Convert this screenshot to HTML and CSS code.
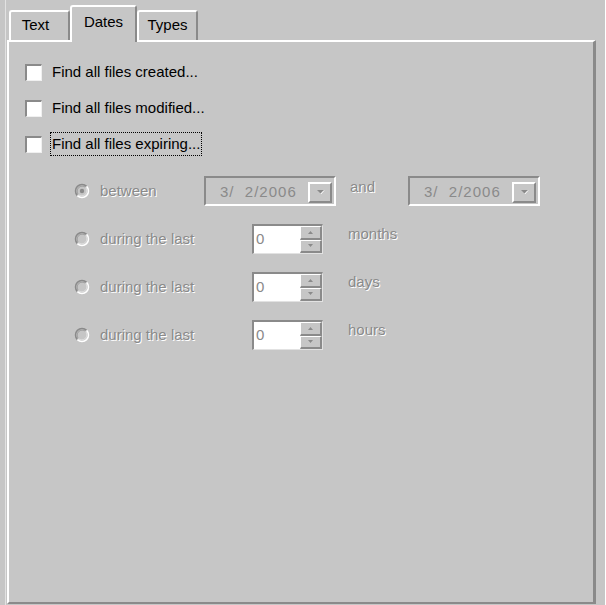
FILE: index.html
```html
<!DOCTYPE html>
<html>
<head>
<meta charset="utf-8">
<link rel="stylesheet" href="styles.css">
</head>
<body>
<div class="window">
  <div class="tabs">
    <div class="tab tab-text">Text</div>
    <div class="tab tab-dates active">Dates</div>
    <div class="tab tab-types">Types</div>
  </div>
  <div class="panel">
    <div class="check-row"><span class="checkbox"></span><span class="label">Find all files created...</span></div>
    <div class="check-row"><span class="checkbox"></span><span class="label">Find all files modified...</span></div>
    <div class="check-row"><span class="checkbox"></span><span class="label focus">Find all files expiring...</span></div>

    <div class="range">
      <div class="row">
        <span class="radio-cell short">
          <svg class="radio" width="16" height="16" viewBox="0 0 16 16"><path d="M3.4 12.6A6.5 6.5 0 0 1 12.6 3.4" fill="none" stroke="#8a8a8a" stroke-width="1.5"/><path d="M12.6 3.4A6.5 6.5 0 0 1 3.4 12.6" fill="none" stroke="#ffffff" stroke-width="1.5"/><path d="M4.4 11.6A5.1 5.1 0 0 1 11.6 4.4" fill="none" stroke="#9c9c9c" stroke-width="1"/><path d="M11.6 4.4A5.1 5.1 0 0 1 4.4 11.6" fill="none" stroke="#e0e0e0" stroke-width="1"/><circle cx="8" cy="8" r="2.2" fill="#8a8a8a"/></svg>
          <span class="dis">between</span>
        </span>
        <div class="combo"><span class="combo-text">3/  2/2006</span><span class="drop"><svg width="9" height="6" viewBox="0 0 9 6"><path d="M1 1h7L4.5 4.5z" fill="#8a8a8a"/><path d="M8 1.5L4.8 5" stroke="#fff" stroke-width="1"/></svg></span></div>
        <span class="dis unit and">and</span>
        <div class="combo"><span class="combo-text">3/  2/2006</span><span class="drop"><svg width="9" height="6" viewBox="0 0 9 6"><path d="M1 1h7L4.5 4.5z" fill="#8a8a8a"/><path d="M8 1.5L4.8 5" stroke="#fff" stroke-width="1"/></svg></span></div>
      </div>

      <div class="row">
        <span class="radio-cell long">
          <svg class="radio" width="16" height="16" viewBox="0 0 16 16"><path d="M3.4 12.6A6.5 6.5 0 0 1 12.6 3.4" fill="none" stroke="#8a8a8a" stroke-width="1.5"/><path d="M12.6 3.4A6.5 6.5 0 0 1 3.4 12.6" fill="none" stroke="#ffffff" stroke-width="1.5"/><path d="M4.4 11.6A5.1 5.1 0 0 1 11.6 4.4" fill="none" stroke="#9c9c9c" stroke-width="1"/><path d="M11.6 4.4A5.1 5.1 0 0 1 4.4 11.6" fill="none" stroke="#e0e0e0" stroke-width="1"/></svg>
          <span class="dis">during the last</span>
        </span>
        <div class="spin"><span class="spin-edit">0</span><span class="spin-btns"><span class="sbtn"><svg width="5" height="3" viewBox="0 0 5 3"><path d="M2.5 0L5 3H0z" fill="#8a8a8a"/></svg></span><span class="sbtn"><svg width="5" height="3" viewBox="0 0 5 3"><path d="M0 0h5L2.5 3z" fill="#8a8a8a"/></svg></span></span></div>
        <span class="dis unit">months</span>
      </div>

      <div class="row">
        <span class="radio-cell long">
          <svg class="radio" width="16" height="16" viewBox="0 0 16 16"><path d="M3.4 12.6A6.5 6.5 0 0 1 12.6 3.4" fill="none" stroke="#8a8a8a" stroke-width="1.5"/><path d="M12.6 3.4A6.5 6.5 0 0 1 3.4 12.6" fill="none" stroke="#ffffff" stroke-width="1.5"/><path d="M4.4 11.6A5.1 5.1 0 0 1 11.6 4.4" fill="none" stroke="#9c9c9c" stroke-width="1"/><path d="M11.6 4.4A5.1 5.1 0 0 1 4.4 11.6" fill="none" stroke="#e0e0e0" stroke-width="1"/></svg>
          <span class="dis">during the last</span>
        </span>
        <div class="spin"><span class="spin-edit">0</span><span class="spin-btns"><span class="sbtn"><svg width="5" height="3" viewBox="0 0 5 3"><path d="M2.5 0L5 3H0z" fill="#8a8a8a"/></svg></span><span class="sbtn"><svg width="5" height="3" viewBox="0 0 5 3"><path d="M0 0h5L2.5 3z" fill="#8a8a8a"/></svg></span></span></div>
        <span class="dis unit">days</span>
      </div>

      <div class="row">
        <span class="radio-cell long">
          <svg class="radio" width="16" height="16" viewBox="0 0 16 16"><path d="M3.4 12.6A6.5 6.5 0 0 1 12.6 3.4" fill="none" stroke="#8a8a8a" stroke-width="1.5"/><path d="M12.6 3.4A6.5 6.5 0 0 1 3.4 12.6" fill="none" stroke="#ffffff" stroke-width="1.5"/><path d="M4.4 11.6A5.1 5.1 0 0 1 11.6 4.4" fill="none" stroke="#9c9c9c" stroke-width="1"/><path d="M11.6 4.4A5.1 5.1 0 0 1 4.4 11.6" fill="none" stroke="#e0e0e0" stroke-width="1"/></svg>
          <span class="dis">during the last</span>
        </span>
        <div class="spin"><span class="spin-edit">0</span><span class="spin-btns"><span class="sbtn"><svg width="5" height="3" viewBox="0 0 5 3"><path d="M2.5 0L5 3H0z" fill="#8a8a8a"/></svg></span><span class="sbtn"><svg width="5" height="3" viewBox="0 0 5 3"><path d="M0 0h5L2.5 3z" fill="#8a8a8a"/></svg></span></span></div>
        <span class="dis unit">hours</span>
      </div>
    </div>
  </div>
</div>
</body>
</html>
```

FILE: styles.css
```css
* { box-sizing: border-box; }
html, body {
  margin: 0;
  padding: 0;
  background: #c6c6c6;
}
body {
  padding-left: 5px;
  width: 606px;
  height: 605px;
  overflow: hidden;
  font-family: "Liberation Sans", Arial, sans-serif;
  font-size: 15px;
  color: #000;
}
.window {
  height: 605px;
  border-left: 1px solid #e2e2e2;
  border-right: 1px solid #ffffff;
  padding: 5px 9px 1px 1px;
  display: flex;
  flex-direction: column;
}
.tabs {
  display: flex;
  align-items: flex-end;
  height: 35px;
  padding-left: 2px;
  position: relative;
  z-index: 1;
}
.tab {
  height: 30px;
  border-top: 2px solid #ffffff;
  border-left: 2px solid #ffffff;
  border-right: 2px solid #8a8a8a;
  border-radius: 3px 3px 0 0;
  padding-top: 3px;
  line-height: 20px;
  text-align: center;
  background: #c6c6c6;
}
.tab-text { width: 61px; padding-right: 8px; }
.tab-dates { width: 67px; }
.tab-types { width: 61px; }
.tab.active {
  height: 37px;
  margin-bottom: -2px;
  padding-top: 5px;
}
.panel {
  flex: 1;
  border-top: 2px solid #ffffff;
  border-left: 2px solid #ffffff;
  border-right: 3px solid #8a8a8a;
  border-bottom: 2px solid #8a8a8a;
  padding: 18px 0 0 16px;
}
.check-row {
  display: flex;
  align-items: center;
  height: 24px;
  margin-bottom: 12px;
}
.checkbox {
  width: 17px;
  height: 17px;
  background: #ffffff;
  border-top: 2px solid #8a8a8a;
  border-left: 2px solid #8a8a8a;
  border-bottom: 1px solid #f0f0f0;
  border-right: 1px solid #f0f0f0;
  flex: none;
}
.label {
  margin-left: 8px;
  padding: 1px 1px;
  line-height: 20px;
  border: 1px solid transparent;
}
.label.focus {
  border: 1px dotted #000;
}
.range {
  margin-top: 20px;
  padding-left: 49px;
}
.row {
  display: flex;
  align-items: center;
  height: 30px;
  margin-bottom: 18px;
}
.radio-cell {
  display: flex;
  align-items: center;
  flex: none;
}
.radio-cell.short { width: 130px; }
.radio-cell.long { width: 178px; }
.radio { flex: none; margin-right: 10px; }
.dis {
  color: #8a8a8a;
  text-shadow: 1px 1px 0 #ffffff;
  line-height: 20px;
  white-space: nowrap;
}
.unit {
  align-self: flex-start;
  margin-left: 25px;
}
.unit.and {
  margin-top: 1px;
  margin-left: 14px;
  width: 58px;
}
.combo {
  width: 132px;
  height: 30px;
  flex: none;
  display: flex;
  align-items: center;
  border-top: 2px solid #8a8a8a;
  border-left: 2px solid #8a8a8a;
  border-bottom: 2px solid #ffffff;
  border-right: 2px solid #ffffff;
  background: #c6c6c6;
}
.combo-text {
  padding-left: 14px;
  color: #8a8a8a;
  white-space: pre;
  letter-spacing: 1px;
  flex: 1;
}
.drop {
  width: 24px;
  height: 21px;
  margin: 2px 2px 0 0;
  display: flex;
  align-items: center;
  justify-content: center;
  border-top: 2px solid #ffffff;
  border-left: 2px solid #ffffff;
  border-bottom: 2px solid #8a8a8a;
  border-right: 2px solid #8a8a8a;
  background: #c6c6c6;
}
.spin {
  display: flex;
  height: 30px;
  flex: none;
}
.spin-edit {
  width: 48px;
  height: 30px;
  background: #ffffff;
  border-top: 2px solid #8a8a8a;
  border-left: 2px solid #8a8a8a;
  border-bottom: 1px solid #e2e2e2;
  padding-left: 2px;
  line-height: 26px;
  color: #8a8a8a;
}
.spin-btns {
  width: 23px;
  display: flex;
  flex-direction: column;
  border-top: 2px solid #8a8a8a;
  border-bottom: 1px solid #e2e2e2;
  border-right: 1px solid #e2e2e2;
}
.sbtn {
  flex: 1;
  display: flex;
  align-items: center;
  justify-content: center;
  border-top: 1px solid #ffffff;
  border-left: 1px solid #ffffff;
  border-bottom: 2px solid #8a8a8a;
  border-right: 2px solid #8a8a8a;
}
```
